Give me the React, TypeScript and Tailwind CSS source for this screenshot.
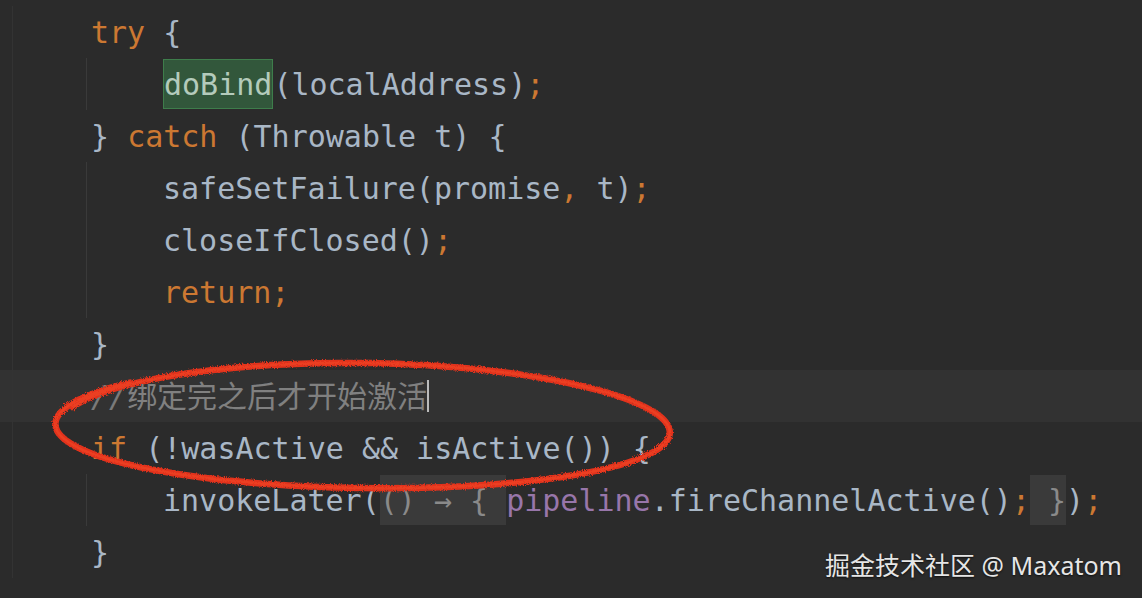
import React from 'react';

const mono = "[font-family:'DejaVu_Sans_Mono','Noto_Sans_CJK_SC',monospace]";

const Kw: React.FC<{ children: React.ReactNode }> = ({ children }) => (
  <span className="text-[#cc7832]">{children}</span>
);
const Field: React.FC<{ children: React.ReactNode }> = ({ children }) => (
  <span className="text-[#9876aa]">{children}</span>
);
const Fold: React.FC<{ children: React.ReactNode }> = ({ children }) => (
  <span className="inline-flex h-[50px] items-center bg-[#3a3a3a] text-[#8a8a8a]">{children}</span>
);

interface LineProps {
  inner?: boolean;
  active?: boolean;
  children: React.ReactNode;
}

// one editor row: gutter, indent guide, code
const Line: React.FC<LineProps> = ({ inner, active, children }) => (
  <div className={`flex h-[52px] items-center ${active ? 'bg-[#323232]' : ''}`}>
    <div className="w-[12px] shrink-0" />
    <div className="h-full w-px shrink-0 bg-[#333333]" />
    <div className="w-[73px] shrink-0" />
    <div className={`h-full w-px shrink-0 ${inner ? 'bg-[#3a3a3a]' : ''}`} />
    <div className={`flex items-center whitespace-pre pl-[4px] ${inner ? 'ml-[72px]' : ''}`}>{children}</div>
  </div>
);

// hand drawn red ring around the comment + if line
const ringPath = (() => {
  const cx = 364;
  const cy = 426;
  const rx = 303;
  const ry = 62;
  const pts: string[] = [];
  const start = Math.PI + 0.25;
  const end = start + Math.PI * 2 + 0.45;
  for (let i = 0; i <= 160; i++) {
    const t = start + ((end - start) * i) / 160;
    const k = 1 + 0.012 * Math.sin(3 * t) + (t - start) * 0.003;
    const x = cx + rx * k * Math.cos(t);
    const y = cy + ry * k * Math.sin(t) + 4 * Math.cos(t);
    pts.push(`${i === 0 ? 'M' : 'L'}${x.toFixed(1)} ${y.toFixed(1)}`);
  }
  return pts.join(' ');
})();

const App: React.FC = () => {
  return (
    <div className={`relative h-[598px] w-[1142px] overflow-hidden bg-[#2b2b2b] pt-[6px] text-[30px] text-[#a9b7c6] ${mono}`}>
      <Line>
        <Kw>try</Kw>{' {'}
      </Line>
      <Line inner>
        <span className="inline-flex h-[50px] items-center border border-[#3e7d4b] bg-[#32573b] text-[#b4cbbb]">doBind</span>
        (localAddress)<Kw>;</Kw>
      </Line>
      <Line>
        {'} '}<Kw>catch</Kw> (Throwable t) {'{'}
      </Line>
      <Line inner>
        safeSetFailure(promise<Kw>,</Kw> t)<Kw>;</Kw>
      </Line>
      <Line inner>
        closeIfClosed()<Kw>;</Kw>
      </Line>
      <Line inner>
        <Kw>return;</Kw>
      </Line>
      <Line>{'}'}</Line>
      <Line active>
        <span className="italic text-[#7a7a7a]">//</span>
        <span className="text-[#808080]">绑定完之后才开始激活</span>
        <span className="inline-block h-[32px] w-[2px] bg-[#bbbbbb]" />
      </Line>
      <Line>
        <Kw>if</Kw> (!wasActive &amp;&amp; isActive()) {'{'}
      </Line>
      <Line inner>
        invokeLater(<Fold>{'() → { '}</Fold>
        <Field>pipeline</Field>.fireChannelActive()<Kw>;</Kw>
        <Fold>{' }'}</Fold>)<Kw>;</Kw>
      </Line>
      <Line>{'}'}</Line>

      <svg className="pointer-events-none absolute left-0 top-0" width="1142" height="598" viewBox="0 0 1142 598">
        <defs>
          <filter id="rough" x="-10%" y="-30%" width="120%" height="160%">
            <feTurbulence type="fractalNoise" baseFrequency="0.9" numOctaves="2" seed="4" />
            <feDisplacementMap in="SourceGraphic" scale="4" />
          </filter>
        </defs>
        <path d={ringPath} fill="none" stroke="#e2331c" strokeWidth="6.5" strokeLinecap="round" filter="url(#rough)" />
        <path d={ringPath} fill="none" stroke="#f24a28" strokeWidth="2.5" strokeLinecap="round" opacity="0.6" filter="url(#rough)" />
      </svg>

      <div className="absolute right-[20px] top-[550px] text-[25px] leading-[30px] text-[#e6e6e6] [font-family:'Noto_Sans','Noto_Sans_CJK_SC',sans-serif] [text-shadow:0_1px_2px_rgba(0,0,0,0.7)]">
        掘金技术社区 @ Maxatom
      </div>
    </div>
  );
};

export default App;
